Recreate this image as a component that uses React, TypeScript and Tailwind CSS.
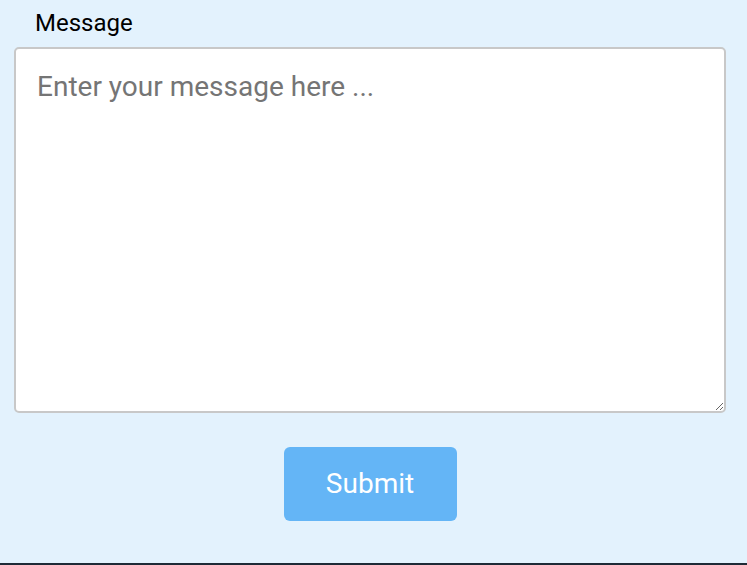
export default function App() {
  return (
    <div className="w-[747px] h-[565px] bg-[#e3f2fd] flex flex-col border-b-2 border-[#1e2a36]" style={{ fontFamily: 'Roboto, "Liberation Sans", sans-serif' }}>
      <div className="pl-[14px] pt-[8px] flex flex-col w-[726px]">
        <label className="pl-[21px] text-[24px] leading-[30px] text-black">Message</label>
        <textarea
          className="mt-[9px] w-[712px] h-[366px] bg-white border-2 border-[#c8c8c8] rounded-[5px] px-[21px] pt-[21px] text-[28px] leading-[34px] text-[#333] placeholder:text-[#757575] outline-none"
          placeholder="Enter your message here ..."
        />
        <div className="flex justify-center mt-[34px]">
          <button className="w-[173px] h-[74px] bg-[#64b5f6] text-white text-[28px] rounded-[6px]">Submit</button>
        </div>
      </div>
    </div>
  );
}
